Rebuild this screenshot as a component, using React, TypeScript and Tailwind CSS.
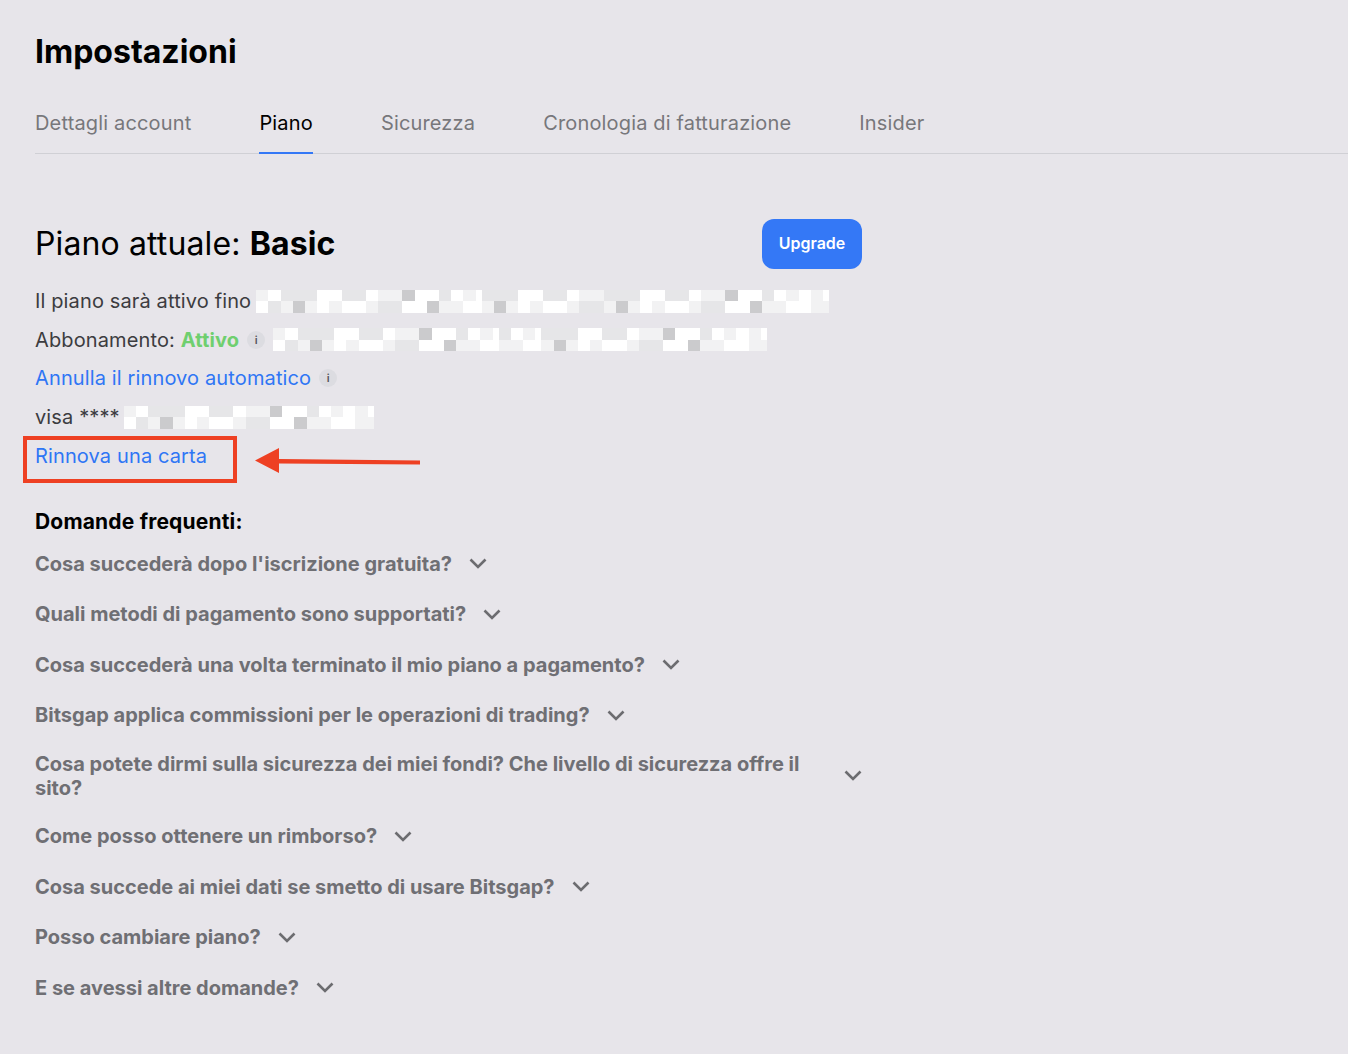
const TOP = "aawwbbbbbbwwwwbbbbwwaaaaccwwwwbbwwaawwaaw";
const BOTTOM = "wwbbaaccaawwaawwwwaabbbbwwwwccaaaawwwwaaa";

const cellClass: Record<string, string> = {
  w: "bg-white",
  a: "bg-[#f2f2f3]",
  b: "bg-[#e6e6e8]",
  c: "bg-[#cbcbcd]",
};

// each slice is [from, to] in half cells of the pattern above
function Redacted({ slices }: { slices: [number, number][] }) {
  const row = (src: string) =>
    slices
      .map(([from, to]) => src.slice(from, to))
      .join("")
      .split("");
  return (
    <div className="flex flex-col">
      {[TOP, BOTTOM].map((src, r) => (
        <div key={r} className="flex h-[11.5px]">
          {row(src).map((c, i) => (
            <span key={i} className={`w-[6.1px] ${cellClass[c]}`} />
          ))}
        </div>
      ))}
    </div>
  );
}

function InfoDot() {
  return (
    <span className="flex h-[18px] w-[18px] items-center justify-center rounded-full bg-[#dcdce1] text-[11px] font-semibold text-[#55555a]">
      i
    </span>
  );
}

function Chevron() {
  return (
    <svg className="shrink-0" width="18" height="11" viewBox="0 0 18 11" fill="none">
      <path d="M1.5 1.5 9 9l7.5-7.5" stroke="#6c6c70" strokeWidth="2.6" />
    </svg>
  );
}

const tabs = ["Dettagli account", "Piano", "Sicurezza", "Cronologia di fatturazione", "Insider"];

const faqs = [
  "Cosa succederà dopo l'iscrizione gratuita?",
  "Quali metodi di pagamento sono supportati?",
  "Cosa succederà una volta terminato il mio piano a pagamento?",
  "Bitsgap applica commissioni per le operazioni di trading?",
  "Cosa potete dirmi sulla sicurezza dei miei fondi? Che livello di sicurezza offre il sito?",
  "Come posso ottenere un rimborso?",
  "Cosa succede ai miei dati se smetto di usare Bitsgap?",
  "Posso cambiare piano?",
  "E se avessi altre domande?",
];

export default function App() {
  return (
    <div className="relative h-[1054px] overflow-hidden bg-[#e7e5ea] pl-[35px] pt-[30px] font-['Inter',sans-serif] text-[20px] leading-[24px] text-[#3c3c40]">
      <h1 className="text-[32px] font-bold leading-[44px] text-black">Impostazioni</h1>

      <nav className="mt-[23px] flex gap-[68px] border-b border-[#d0d0d5] tracking-[0.16px]">
        {tabs.map((tab) => (
          <div
            key={tab}
            className={
              tab === "Piano"
                ? "-mb-px h-[57px] border-b-2 border-[#3478f6] pt-[14px] text-black"
                : "h-[56px] pt-[14px] text-[#77777b]"
            }
          >
            {tab}
          </div>
        ))}
      </nav>

      <main className="w-[827px]">
        <div className="mt-[65px] flex h-[50px] items-center justify-between">
          <h2 className="text-[32px] leading-[50px] tracking-[0.12px] text-black">
            Piano attuale: <b>Basic</b>
          </h2>
          <button className="h-[50px] w-[100px] rounded-[12px] bg-[#3478f6] pb-[2px] text-[16px] font-semibold text-white">
            Upgrade
          </button>
        </div>

        <div className="mt-[20px] flex flex-col gap-[14.7px] tracking-[0.13px]">
          <div className="flex h-[24px] items-center gap-[5px]">
            <span>Il piano sarà attivo fino</span>
            <Redacted slices={[[0, 37], [4, 24], [4, 41]]} />
          </div>
          <div className="flex h-[24px] items-center gap-[8px]">
            <span>
              Abbonamento: <b className="font-bold text-[#6fcf6f]">Attivo</b>
            </span>
            <InfoDot />
            <Redacted slices={[[0, 37], [30, 37], [4, 41]]} />
          </div>
          <div className="flex h-[24px] items-center gap-[8px]">
            <a className="text-[#2f76f5]">Annulla il rinnovo automatico</a>
            <InfoDot />
          </div>
          <div className="flex h-[24px] items-center gap-[4px]">
            <span>visa ****</span>
            <Redacted slices={[[0, 41]]} />
          </div>
          <a className="h-[24px] text-[#2f76f5]">Rinnova una carta</a>
        </div>

        <h3 className="mt-[42px] text-[21px] font-bold tracking-[0.18px] text-black">Domande frequenti:</h3>

        <div className="mt-[16px] flex flex-col gap-[22.5px]">
          {faqs.map((q) => (
            <div key={q} className="flex min-h-[28px] items-center gap-[17px] font-bold text-[#6f6f74]">
              <span>{q}</span>
              <Chevron />
            </div>
          ))}
        </div>
      </main>

      <div className="absolute left-[23px] top-[436px] h-[47px] w-[214px] border-[4px] border-[#ee4023]" />
      <svg className="absolute left-[255px] top-[447px]" width="166" height="27" viewBox="0 0 166 27">
        <path d="M0 13.5 24 1v11l141 1.5v4L24 16.5V26z" fill="#ee4023" />
      </svg>
    </div>
  );
}
